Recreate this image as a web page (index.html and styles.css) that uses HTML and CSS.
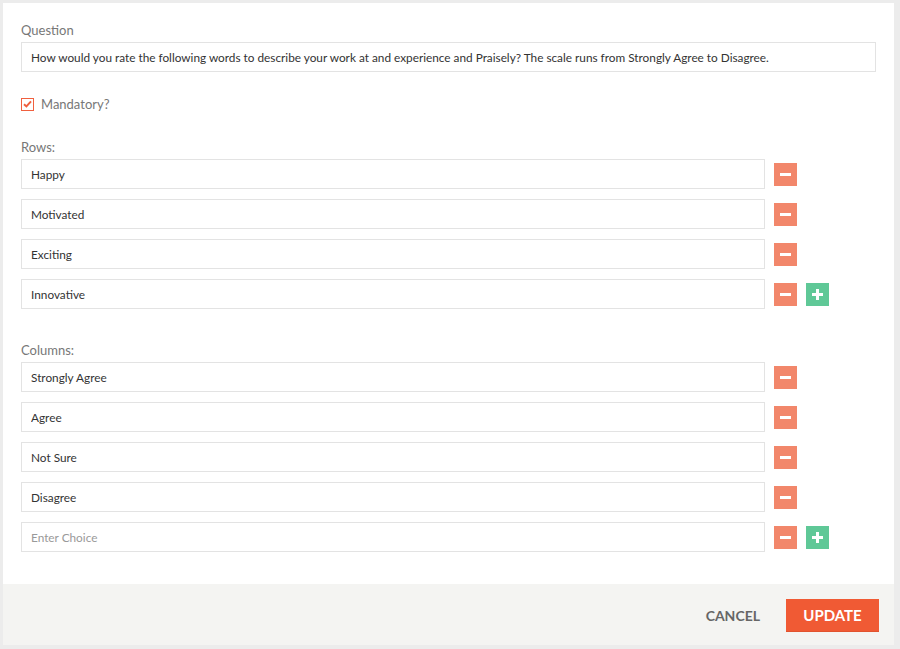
FILE: index.html
```html
<!DOCTYPE html>
<html lang="en">
<head>
    <meta charset="UTF-8">
    <meta name="viewport" content="width=device-width, initial-scale=1.0">
    <title>Edit question</title>
    <link rel="stylesheet" href="styles.css">
</head>
<body>

<div class="modal">
    <div class="modal-body">
        <!-- Question text -->
        <label class="field-label">Question</label>
        <input class="text-input" type="text" value="How would you rate the following words to describe your work at and experience and Praisely? The scale runs from Strongly Agree to Disagree.">

        <label class="check-row">
            <span class="checkbox">
                <svg width="9" height="8" viewBox="0 0 9 8"><path d="M1 4.2 L3.4 6.4 L8 1.4" fill="none" stroke="#f0603f" stroke-width="2"/></svg>
            </span>
            Mandatory?
        </label>

        <!-- Rows -->
        <label class="field-label rows-label">Rows:</label>
        <div class="choice-list">
            <div class="choice">
                <input class="text-input" type="text" value="Happy">
                <button class="icon-btn remove"><span class="bar"></span></button>
            </div>
            <div class="choice">
                <input class="text-input" type="text" value="Motivated">
                <button class="icon-btn remove"><span class="bar"></span></button>
            </div>
            <div class="choice">
                <input class="text-input" type="text" value="Exciting">
                <button class="icon-btn remove"><span class="bar"></span></button>
            </div>
            <div class="choice">
                <input class="text-input" type="text" value="Innovative">
                <button class="icon-btn remove"><span class="bar"></span></button>
                <button class="icon-btn add"><span class="bar"></span><span class="bar vertical"></span></button>
            </div>
        </div>

        <!-- Columns -->
        <label class="field-label columns-label">Columns:</label>
        <div class="choice-list">
            <div class="choice">
                <input class="text-input" type="text" value="Strongly Agree">
                <button class="icon-btn remove"><span class="bar"></span></button>
            </div>
            <div class="choice">
                <input class="text-input" type="text" value="Agree">
                <button class="icon-btn remove"><span class="bar"></span></button>
            </div>
            <div class="choice">
                <input class="text-input" type="text" value="Not Sure">
                <button class="icon-btn remove"><span class="bar"></span></button>
            </div>
            <div class="choice">
                <input class="text-input" type="text" value="Disagree">
                <button class="icon-btn remove"><span class="bar"></span></button>
            </div>
            <div class="choice">
                <input class="text-input" type="text" placeholder="Enter Choice">
                <button class="icon-btn remove"><span class="bar"></span></button>
                <button class="icon-btn add"><span class="bar"></span><span class="bar vertical"></span></button>
            </div>
        </div>
    </div>

    <div class="modal-footer">
        <button class="btn-cancel">CANCEL</button>
        <button class="btn-update">UPDATE</button>
    </div>
</div>

</body>
</html>
```

FILE: styles.css
```css
/* Styles for the question editor */
body {
    font-family: Lato, "Open Sans", sans-serif;
    margin: 0;
    padding: 0;
    background-color: #ececec;
    color: #333;
}
.modal {
    margin: 3px 6px 0 3px;
    background: #ffffff;
}
.modal-body {
    padding: 19px 18px 32px 18px;
}
.field-label {
    display: block;
    font-size: 13px;
    line-height: 16px;
    color: #777;
    margin-bottom: 4px;
}
.text-input {
    display: block;
    box-sizing: border-box;
    width: 100%;
    height: 30px;
    padding: 0 9px;
    border: 1px solid #e3e3e3;
    border-radius: 0;
    font-family: Lato, "Open Sans", sans-serif;
    font-size: 11.8px;
    color: #333;
    outline: none;
}
.text-input::placeholder {
    color: #999;
}
.check-row {
    display: flex;
    align-items: center;
    gap: 7px;
    margin-top: 25px;
    height: 14px;
    font-size: 13px;
    color: #777;
}
.checkbox {
    box-sizing: border-box;
    width: 13px;
    height: 13px;
    border: 1px solid #f0603f;
    display: flex;
    align-items: center;
    justify-content: center;
}
.rows-label {
    margin-top: 28px;
}
.columns-label {
    margin-top: 33px;
}
.choice-list {
    display: flex;
    flex-direction: column;
    gap: 10px;
}
.choice {
    display: flex;
    align-items: center;
    gap: 9px;
    padding-right: 79px;
}
.choice .text-input {
    flex: 1;
}
.choice .add {
    margin-right: -32px;
}
.icon-btn {
    position: relative;
    width: 23px;
    height: 23px;
    padding: 0;
    border: none;
    flex-shrink: 0;
    cursor: pointer;
}
.icon-btn.remove {
    background: #f2876b;
}
.icon-btn.add {
    background: #5fc897;
}
.icon-btn .bar {
    position: absolute;
    left: 6px;
    top: 10px;
    width: 11px;
    height: 3px;
    background: #ffffff;
}
.icon-btn .bar.vertical {
    left: 10px;
    top: 6px;
    width: 3px;
    height: 11px;
}
.modal-footer {
    background: #f4f4f2;
    height: 61px;
    padding: 15px 15px 0 0;
    box-sizing: border-box;
    display: flex;
    justify-content: flex-end;
    align-items: flex-start;
    gap: 26px;
}
.btn-cancel {
    background: none;
    border: none;
    padding: 0;
    height: 33px;
    font-family: Lato, "Open Sans", sans-serif;
    font-size: 14px;
    font-weight: bold;
    color: #666;
    cursor: pointer;
}
.btn-update {
    width: 93px;
    height: 33px;
    background: #f05a34;
    border: none;
    border-bottom: 1px solid #e1532f;
    color: #ffffff;
    font-family: Lato, "Open Sans", sans-serif;
    font-size: 15px;
    font-weight: bold;
    cursor: pointer;
}
```
